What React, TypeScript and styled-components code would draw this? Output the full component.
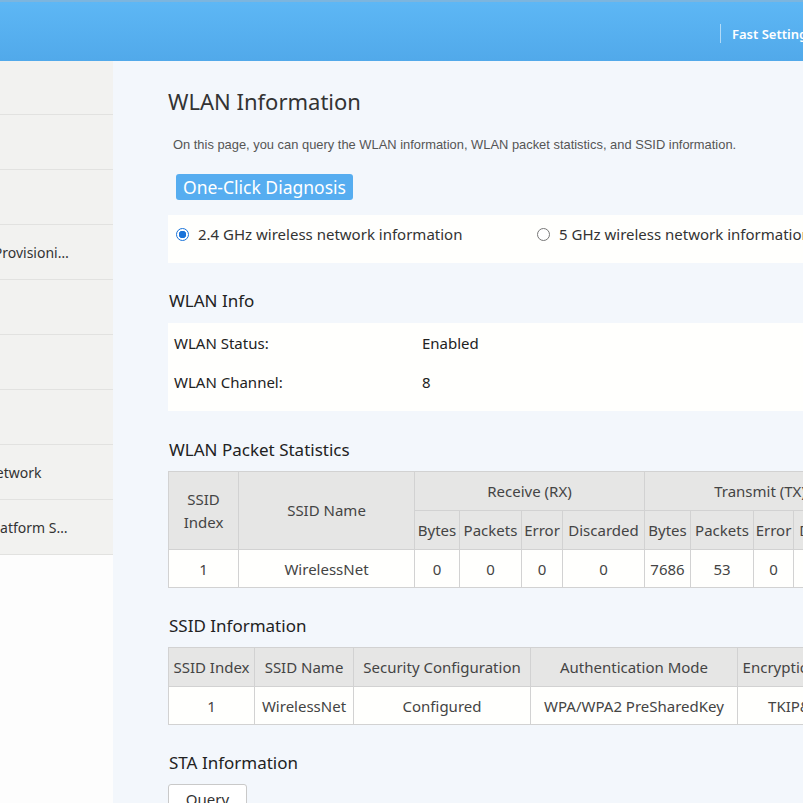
import React from 'react';
import styled, { createGlobalStyle } from 'styled-components';

const GlobalStyle = createGlobalStyle`
  html, body {
    margin: 0;
    padding: 0;
    background: #fdfdfd;
    font-family: "Noto Sans", "Open Sans", sans-serif;
    color: #333;
  }
  * { box-sizing: border-box; }
`;

const Page = styled.div`
  width: 803px;
  height: 803px;
  overflow: hidden;
  display: flex;
  flex-direction: column;
`;

const TopBar = styled.header`
  flex: 0 0 61px;
  width: 1100px;
  border-top: 2px solid #7cb5de;
  background: linear-gradient(#5db7f5, #51a9ea);
  display: flex;
  align-items: center;
  padding: 4px 0 0 720px;
`;

const TopLink = styled.span`
  display: flex;
  align-items: center;
  height: 19px;
  padding-left: 11px;
  border-left: 1px solid rgba(255, 255, 255, 0.55);
  color: #fff;
  font-size: 13px;
  font-weight: 600;
  white-space: nowrap;
`;

const Body = styled.div`
  flex: 1;
  display: flex;
  width: 1100px;
`;

const Sidebar = styled.nav`
  flex: 0 0 113px;
  overflow: hidden;
  background: #fdfdfd;
`;

/* the menu is scrolled sideways, so only the tail of the long labels shows */
const NavList = styled.ul`
  list-style: none;
  margin: 0 0 0 -83px;
  padding: 0;
  width: 196px;
`;

const NavItem = styled.li`
  height: 55px;
  display: flex;
  align-items: center;
  padding: 0 42px 0 0;
  background: #f2f2f0;
  border-bottom: 1px solid #e2e2e0;
  font-size: 14px;
  color: #333;
  &:first-child { height: 54px; }
`;

const NavText = styled.span`
  display: block;
  width: 100%;
  overflow: hidden;
  white-space: nowrap;
  text-overflow: ellipsis;
`;

const Main = styled.main`
  flex: 1;
  background: #f3f7fc;
  padding: 25px 0 0 55px;
`;

const Title = styled.h1`
  margin: 0;
  font-size: 22px;
  line-height: 30px;
  font-weight: 400;
  color: #333;
`;

const Description = styled.p`
  margin: 21px 0 0;
  padding-left: 5px;
  font-family: "Liberation Sans", Arial, sans-serif;
  font-size: 12.9px;
  line-height: 16px;
  color: #555;
`;

const DiagnoseButton = styled.button`
  display: block;
  margin: 21px 0 0 8px;
  height: 26px;
  padding: 0 7px;
  border: none;
  border-radius: 3px;
  background: #56adf0;
  color: #fff;
  font-family: inherit;
  font-size: 17.5px;
  line-height: 26px;
`;

const BandPanel = styled.div`
  margin-top: 15px;
  height: 48px;
  display: flex;
  align-items: flex-start;
  padding: 8px 0 0 8px;
  background: #fffffd;
`;

const BandOption = styled.label`
  display: flex;
  align-items: center;
  gap: 9px;
  min-width: 361px;
  font-size: 15px;
  line-height: 22px;
  color: #333;
`;

const RadioDot = styled.span<{ $checked?: boolean }>`
  width: 13px;
  height: 13px;
  border-radius: 50%;
  border: 1px solid ${p => (p.$checked ? '#1a73d9' : '#777')};
  background: ${p => (p.$checked ? 'radial-gradient(circle, #1a73d9 0 3.5px, #fff 4px)' : '#fff')};
`;

const SectionTitle = styled.h2<{ $top: number }>`
  margin: ${p => p.$top}px 0 0 1px;
  font-size: 17px;
  line-height: 24px;
  font-weight: 400;
  color: #222;
`;

const InfoPanel = styled.div`
  margin-top: 10px;
  padding-bottom: 10px;
  background: #fffffd;
`;

const InfoRow = styled.div`
  height: 39px;
  display: grid;
  grid-template-columns: 248px 1fr;
  align-items: center;
  padding-left: 6px;
  font-size: 15px;
  color: #222;
`;

const Table = styled.table`
  margin-top: 9px;
  border-collapse: collapse;
  table-layout: fixed;
  font-size: 15px;
  color: #444;
`;

const HeadCell = styled.th`
  height: 39px;
  padding: 0;
  background: #e6e6e5;
  border: 1px solid #d2d2d2;
  font-weight: 400;
  line-height: 23px;
  text-align: center;
  white-space: nowrap;
`;

const DataCell = styled.td`
  height: 38px;
  padding: 0;
  background: #fffffd;
  border: 1px solid #d2d2d2;
  text-align: center;
  white-space: nowrap;
`;

const QueryButton = styled.button`
  display: block;
  margin-top: 9px;
  width: 79px;
  height: 30px;
  border: 1px solid #c9c9c9;
  border-radius: 3px;
  background: #fff;
  font-family: inherit;
  font-size: 15px;
  color: #333;
`;

const navItems = [
  'Device Info',
  'WAN Info',
  'LAN Info',
  'Zero-Touch Provisioning',
  'WLAN Info',
  'Optical Info',
  'VoIP Info',
  'IoT Home Network',
  'Intelligent Platform Status',
];

const statCols = [70, 176, 45, 62, 41, 82, 46, 63, 40, 82];
const ssidCols = [86, 99, 177, 207, 130];

export default function App() {
  return (
    <Page>
      <GlobalStyle />
      <TopBar>
        <TopLink>Fast Setting</TopLink>
      </TopBar>
      <Body>
        <Sidebar>
          <NavList>
            {navItems.map(item => (
              <NavItem key={item}>
                <NavText>{item}</NavText>
              </NavItem>
            ))}
          </NavList>
        </Sidebar>
        <Main>
          <Title>WLAN Information</Title>
          <Description>
            On this page, you can query the WLAN information, WLAN packet statistics, and SSID information.
          </Description>
          <DiagnoseButton>One-Click Diagnosis</DiagnoseButton>
          <BandPanel>
            <BandOption>
              <RadioDot $checked />
              2.4 GHz wireless network information
            </BandOption>
            <BandOption>
              <RadioDot />
              5 GHz wireless network information
            </BandOption>
          </BandPanel>

          <SectionTitle $top={26}>WLAN Info</SectionTitle>
          <InfoPanel>
            <InfoRow>
              <span>WLAN Status:</span>
              <span>Enabled</span>
            </InfoRow>
            <InfoRow>
              <span>WLAN Channel:</span>
              <span>8</span>
            </InfoRow>
          </InfoPanel>

          <SectionTitle $top={27}>WLAN Packet Statistics</SectionTitle>
          <Table>
            <colgroup>
              {statCols.map((w, i) => (
                <col key={i} style={{ width: w }} />
              ))}
            </colgroup>
            <thead>
              <tr>
                <HeadCell rowSpan={2}>SSID<br />Index</HeadCell>
                <HeadCell rowSpan={2}>SSID Name</HeadCell>
                <HeadCell colSpan={4}>Receive (RX)</HeadCell>
                <HeadCell colSpan={4}>Transmit (TX)</HeadCell>
              </tr>
              <tr>
                <HeadCell>Bytes</HeadCell>
                <HeadCell>Packets</HeadCell>
                <HeadCell>Error</HeadCell>
                <HeadCell>Discarded</HeadCell>
                <HeadCell>Bytes</HeadCell>
                <HeadCell>Packets</HeadCell>
                <HeadCell>Error</HeadCell>
                <HeadCell>Discarded</HeadCell>
              </tr>
            </thead>
            <tbody>
              <tr>
                <DataCell>1</DataCell>
                <DataCell>WirelessNet</DataCell>
                <DataCell>0</DataCell>
                <DataCell>0</DataCell>
                <DataCell>0</DataCell>
                <DataCell>0</DataCell>
                <DataCell>7686</DataCell>
                <DataCell>53</DataCell>
                <DataCell>0</DataCell>
                <DataCell>0</DataCell>
              </tr>
            </tbody>
          </Table>

          <SectionTitle $top={26}>SSID Information</SectionTitle>
          <Table>
            <colgroup>
              {ssidCols.map((w, i) => (
                <col key={i} style={{ width: w }} />
              ))}
            </colgroup>
            <thead>
              <tr>
                <HeadCell>SSID Index</HeadCell>
                <HeadCell>SSID Name</HeadCell>
                <HeadCell>Security Configuration</HeadCell>
                <HeadCell>Authentication Mode</HeadCell>
                <HeadCell>Encryption Mode</HeadCell>
              </tr>
            </thead>
            <tbody>
              <tr>
                <DataCell>1</DataCell>
                <DataCell>WirelessNet</DataCell>
                <DataCell>Configured</DataCell>
                <DataCell>WPA/WPA2 PreSharedKey</DataCell>
                <DataCell>TKIP&amp;AES</DataCell>
              </tr>
            </tbody>
          </Table>

          <SectionTitle $top={26}>STA Information</SectionTitle>
          <QueryButton>Query</QueryButton>
        </Main>
      </Body>
    </Page>
  );
}
